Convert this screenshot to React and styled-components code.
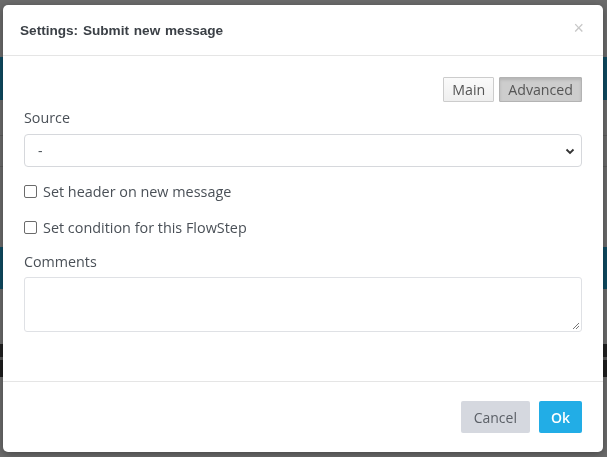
import React from "react";
import styled, { createGlobalStyle } from "styled-components";

const GlobalStyle = createGlobalStyle`
  html, body {
    margin: 0;
    padding: 0;
    background: #6c6c6c;
    font-family: "Open Sans", "Liberation Sans", sans-serif;
  }
  * { box-sizing: border-box; }
`;

const Backdrop = styled.div`
  width: 607px;
  height: 457px;
  overflow: hidden;
  background: #6c6c6c;
  display: flex;
  flex-direction: column;
`;

const Strip = styled.div`
  height: ${(p) => p.h}px;
  background: ${(p) => p.bg};
  border-bottom: ${(p) => (p.line ? "1px solid #5e5e5e" : "none")};
`;

const Modal = styled.div`
  position: fixed;
  top: 5px;
  left: 3px;
  width: 600px;
  height: 447px;
  background: #fff;
  border-radius: 5px;
  box-shadow: 0 2px 8px rgba(0, 0, 0, 0.35);
  display: flex;
  flex-direction: column;
`;

const Header = styled.div`
  height: 51px;
  padding: 0 17px;
  display: flex;
  align-items: center;
  justify-content: space-between;
  border-bottom: 1px solid #e5e5e5;
`;

const Title = styled.h4`
  margin: 0;
  font-family: "Liberation Sans", Arial, sans-serif;
  font-size: 13.6px;
  font-weight: bold;
  color: #3b4046;
  word-spacing: 1px;
`;

const Close = styled.span`
  font-family: "Liberation Sans", Arial, sans-serif;
  font-size: 18px;
  color: #c8c8c8;
  margin-top: -4px;
  margin-right: 2px;
`;

const Body = styled.div`
  flex: 1;
  padding: 21px 21px 0 21px;
  display: flex;
  flex-direction: column;
`;

const Tabs = styled.div`
  display: flex;
  justify-content: flex-end;
  gap: 5px;
`;

const Tab = styled.button`
  height: 25px;
  padding: 0 8px;
  font-family: "Open Sans", sans-serif;
  font-size: 14.2px;
  color: #555;
  border: 1px solid ${(p) => (p.active ? "#b3b3b3" : "#ccc")};
  background: ${(p) =>
    p.active ? "#cdcdcd" : "linear-gradient(#fafafa, #efefef)"};
  box-shadow: ${(p) =>
    p.active ? "inset 0 2px 3px rgba(0,0,0,0.12)" : "none"};
  border-radius: 1px;
`;

const Label = styled.div`
  font-size: 14.3px;
  line-height: 20px;
  color: #4a5057;
  margin-top: ${(p) => p.top}px;
`;

const Select = styled.div`
  margin-top: 6px;
  height: 33px;
  border: 1px solid #d6d8dc;
  border-radius: 4px;
  display: flex;
  align-items: center;
  justify-content: space-between;
  padding: 0 6px 0 13px;
  font-size: 14px;
  color: #495057;
`;

const CheckRow = styled.label`
  display: flex;
  align-items: center;
  gap: 6px;
  height: 20px;
  margin-top: ${(p) => p.top}px;
  font-size: 14.4px;
  color: #4a5057;
`;

const Box = styled.span`
  width: 13px;
  height: 13px;
  border: 1px solid #6b6b6b;
  border-radius: 2px;
  background: #fff;
`;

const TextArea = styled.div`
  position: relative;
  margin-top: 5px;
  height: 55px;
  border: 1px solid #dfe1e5;
  border-radius: 3px;
`;

const Grip = styled.svg`
  position: absolute;
  right: 1px;
  bottom: 1px;
`;

const Footer = styled.div`
  height: 71px;
  border-top: 1px solid #e5e5e5;
  display: flex;
  justify-content: flex-end;
  align-items: center;
  gap: 9px;
  padding: 0 21px 0 0;
`;

const Button = styled.button`
  height: 32px;
  padding: 0 ${(p) => (p.primary ? 12 : 13)}px;
  border: none;
  border-radius: 2px;
  font-family: "Open Sans", sans-serif;
  font-size: 14px;
  font-weight: ${(p) => (p.primary ? 600 : 400)};
  color: ${(p) => (p.primary ? "#fff" : "#5a5f66")};
  background: ${(p) => (p.primary ? "#22ade6" : "#d5d8df")};
`;

export default function App() {
  return (
    <>
      <GlobalStyle />
      <Backdrop>
        <Strip h={57} bg="#6c6c6c" />
        <Strip h={43} bg="#0f4c63" />
        <Strip h={36} bg="#6c6c6c" line />
        <Strip h={31} bg="#6c6c6c" line />
        <Strip h={80} bg="#6c6c6c" />
        <Strip h={42} bg="#0f4c63" />
        <Strip h={55} bg="#6c6c6c" />
        <Strip h={13} bg="#222" />
        <Strip h={3} bg="#555" />
        <Strip h={17} bg="#1e1e1e" />
      </Backdrop>
      <Modal>
        <Header>
          <Title>Settings: Submit new message</Title>
          <Close>×</Close>
        </Header>
        <Body>
          <Tabs>
            <Tab>Main</Tab>
            <Tab active>Advanced</Tab>
          </Tabs>
          <Label top={6}>Source</Label>
          <Select>
            <span>-</span>
            <svg width="10" height="8" viewBox="0 0 10 8">
              <path d="M1.5 2.5 L5 6 L8.5 2.5" fill="none" stroke="#333" strokeWidth="1.8" />
            </svg>
          </Select>
          <CheckRow top={14}>
            <Box />
            Set header on new message
          </CheckRow>
          <CheckRow top={16}>
            <Box />
            Set condition for this FlowStep
          </CheckRow>
          <Label top={15}>Comments</Label>
          <TextArea>
            <Grip width="8" height="8" viewBox="0 0 8 8">
              <path d="M7 1 L1 7 M7 4 L4 7" stroke="#777" strokeWidth="1" />
            </Grip>
          </TextArea>
        </Body>
        <Footer>
          <Button>Cancel</Button>
          <Button primary>Ok</Button>
        </Footer>
      </Modal>
    </>
  );
}
